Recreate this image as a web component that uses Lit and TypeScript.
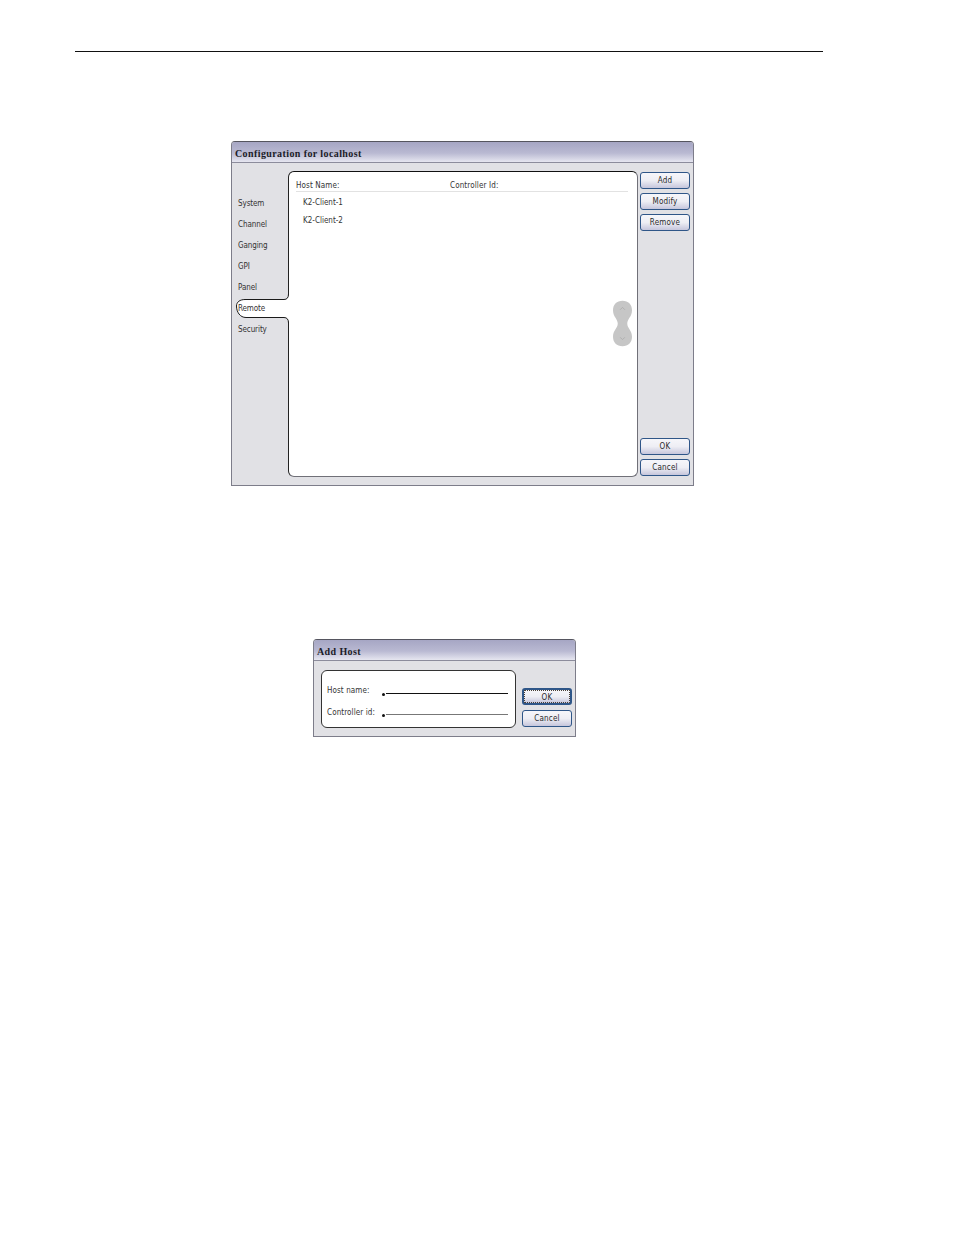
import { LitElement, html, css, svg } from "lit";
import { customElement } from "lit/decorators.js";

const TABS = ["System", "Channel", "Ganging", "GPI", "Panel", "Remote", "Security"];

@customElement("app-root")
export class AppRoot extends LitElement {
  static styles = css`
    :host {
      display: block;
      width: 954px;
      height: 1235px;
      background: #fff;
      overflow: hidden;
      font-family: "DejaVu Sans Condensed", "DejaVu Sans", sans-serif;
      font-stretch: condensed;
      font-size: 8px;
      color: #333;
    }
    * { box-sizing: border-box; }
    .page { padding-top: 51px; }
    .rule { margin-left: 75px; width: 748px; height: 1px; background: #111; }
    .win {
      display: flex;
      flex-direction: column;
      border: 1px solid #7d7d8a;
      border-top-color: #55555f;
      border-radius: 4px 4px 0 0;
      background: #e1e1e5;
    }
    .main { margin: 89px 0 0 231px; width: 463px; height: 345px; }
    .dlg { margin: 153px 0 0 313px; width: 263px; height: 98px; }
    .title {
      height: 21px;
      flex: none;
      padding: 2px 0 0 3px;
      display: flex;
      align-items: center;
      font: bold 10px "Liberation Serif", "DejaVu Serif", serif;
      letter-spacing: 0.4px;
      color: #1c1c28;
      background: linear-gradient(#a6a6c4, #b9b9d2 55%, #e6e6f0);
      border-radius: 3px 3px 0 0;
      border-bottom: 1px solid #8c8c9c;
    }
    .body {
      flex: 1;
      display: grid;
      position: relative;
      min-height: 0;
    }
    .main .body { grid-template-columns: 56px 350px 50px; padding: 8px 0 8px 0; }
    .tabs { padding: 22px 0 0 6px; display: flex; flex-direction: column; }
    .tab { height: 21px; line-height: 21px; letter-spacing: -0.1px; }
    .tab.on { position: relative; z-index: 2; }
    .tabshape { position: absolute; left: 2px; top: 131px; z-index: 1; display: block; }
    .panel {
      position: relative;
      background: #fff;
      border: 1px solid #707078;
      border-top-color: #111;
      border-left-color: #222;
      border-radius: 6px;
    }
    .head {
      display: grid;
      grid-template-columns: 154px 1fr;
      height: 20px;
      margin: 0 9px 0 7px;
      line-height: 27px;
      border-bottom: 1px solid #e2e2e2;
      letter-spacing: 0.12px;
    }
    .rows { padding: 2px 0 0 14px; }
    .row { height: 18px; line-height: 18px; }
    .scroll { position: absolute; right: 5px; top: 127px; display: block; }
    .side { display: flex; flex-direction: column; gap: 4px; padding: 1px 0; margin-left: 2px; width: 50px; }
    .spacer { flex: 1; }
    .btn {
      height: 17px;
      flex: none;
      border: 1px solid #2f5688;
      border-radius: 3px;
      background: linear-gradient(#f6f6fa, #eeeef4 50%, #c6c6dc);
      display: flex;
      align-items: center;
      justify-content: center;
      padding-bottom: 1px;
      letter-spacing: 0.2px;
      color: #2a2a2a;
    }
    .btn.focus {
      border-width: 2px;
      padding: 1px 0 0;
      outline: 1px dotted #4a4036;
      outline-offset: -3px;
    }
    .dlg .body { grid-template-columns: 195px 50px; column-gap: 6px; padding: 9px 0 8px 7px; }
    .form {
      background: #fff;
      border: 1px solid #333;
      border-radius: 6px;
      padding: 9px 7px 0 5px;
    }
    .frow { display: flex; height: 22px; line-height: 22px; letter-spacing: 0.1px; }
    .frow label { width: 55px; flex: none; }
    .field { flex: 1; display: flex; align-items: center; height: 3px; margin-top: 12px; }
    .field.b { margin-top: 11px; }
    .dot { width: 3px; height: 3px; border-radius: 50%; background: #111; flex: none; margin-right: 1px; position: relative; top: 1px; }
    .line { flex: 1; height: 1.5px; background: #111; }
    .field.b .line { height: 1px; background: #777; }
    .dside { display: flex; flex-direction: column; gap: 5px; padding-top: 18px; }
  `;

  render() {
    return html`
      <div class="page">
        <div class="rule"></div>

        <div class="win main">
          <div class="title">Configuration for localhost</div>
          <div class="body">
            <div class="tabs">
              ${TABS.map((t) => html`<div class="tab ${t === "Remote" ? "on" : ""}">${t}</div>`)}
            </div>
            <div class="panel">
              <div class="head"><span>Host Name:</span><span>Controller Id:</span></div>
              <div class="rows">
                <div class="row">K2-Client-1</div>
                <div class="row">K2-Client-2</div>
              </div>
              <svg class="scroll" width="19" height="49" viewBox="0 0 20 48">
                <path fill="#c6c6c6" d="M10 0C16 0 20 4 20 10C20 17 15 19 15 24C15 29 20 31 20 38C20 44 16 48 10 48C4 48 0 44 0 38C0 31 5 29 5 24C5 19 0 17 0 10C0 4 4 0 10 0Z"/>
                <path fill="none" stroke="#aeaeae" d="M7.5 9.5L10 7L12.5 9.5M7.5 38.5L10 41L12.5 38.5"/>
              </svg>
            </div>
            <svg class="tabshape" width="56" height="29" viewBox="0 0 56 29">
              ${svg`<path fill="#fff" d="M56 0H54.5Q54.5 5.5 50 5.5H11C6 5.5 2.5 8 2.5 12C2.5 18 6 23.5 12 23.5H50Q54.5 23.5 54.5 29H56Z"/>
              <path fill="none" stroke="#1a1a1a" d="M54.5 0Q54.5 5.5 50 5.5H11C6 5.5 2.5 8 2.5 12C2.5 18 6 23.5 12 23.5H50Q54.5 23.5 54.5 29"/>`}
            </svg>
            <div class="side">
              <div class="btn">Add</div>
              <div class="btn">Modify</div>
              <div class="btn">Remove</div>
              <div class="spacer"></div>
              <div class="btn">OK</div>
              <div class="btn">Cancel</div>
            </div>
          </div>
        </div>

        <div class="win dlg">
          <div class="title">Add Host</div>
          <div class="body">
            <div class="form">
              <div class="frow"><label>Host name:</label><div class="field"><span class="dot"></span><span class="line"></span></div></div>
              <div class="frow"><label>Controller id:</label><div class="field b"><span class="dot"></span><span class="line"></span></div></div>
            </div>
            <div class="dside">
              <div class="btn focus">OK</div>
              <div class="btn">Cancel</div>
            </div>
          </div>
        </div>
      </div>
    `;
  }
}
